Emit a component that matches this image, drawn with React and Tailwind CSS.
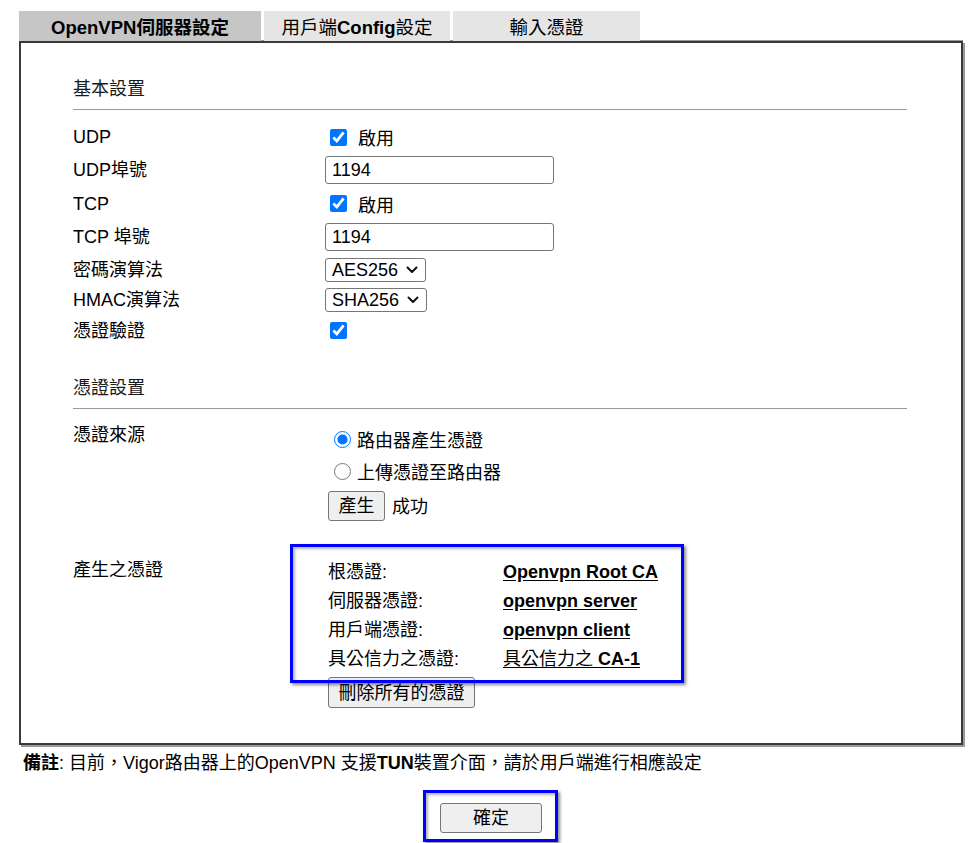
import React from "react";

function Chevron() {
  return (
    <svg width="12" height="8" viewBox="0 0 12 8" className="ml-auto mr-[7px]">
      <path d="M1.5 1.5 L6 6 L10.5 1.5" fill="none" stroke="#111" strokeWidth="2" strokeLinecap="round" strokeLinejoin="round" />
    </svg>
  );
}

function FakeSelect({ value, w }) {
  return (
    <div className={`flex items-center h-[24px] border border-[#767676] rounded-[3px] bg-white pl-[6px] ${w}`}>
      <span className="leading-none">{value}</span>
      <Chevron />
    </div>
  );
}

function TextBox({ value }) {
  return (
    <div className="flex items-center w-[229px] h-[28px] border border-[#767676] rounded-[3px] bg-white pl-[6px]">
      <span className="leading-none">{value}</span>
    </div>
  );
}

function Check({ label }) {
  return (
    <div className="flex items-center pl-[5px]">
      <input type="checkbox" defaultChecked className="w-[17px] h-[17px] accent-[#0075ff]" />
      {label && <span className="ml-[11px] mt-[4px] leading-none">{label}</span>}
    </div>
  );
}

function Btn({ children, w, h = "h-[31px]" }) {
  return (
    <div className={`flex items-center justify-center ${w} ${h} border border-[#767676] rounded-[3px] bg-[#efefef]`}>
      <span className="leading-none">{children}</span>
    </div>
  );
}

function Row({ label, h, children }) {
  return (
    <div className={`flex items-center ${h}`}>
      <div className="w-[252px] leading-[24px]">{label}</div>
      <div className="flex items-center">{children}</div>
    </div>
  );
}

export default function App() {
  return (
    <div className="relative w-[974px] h-[843px] bg-white text-black text-[18px] font-['Liberation_Sans','Noto_Sans_CJK_TC',sans-serif] overflow-hidden">
      {/* Tabs */}
      <div className="flex gap-[3px] pt-[11px] pl-[19px] text-[18.5px]">
        <div className="w-[242px] h-[30px] pt-[3px] bg-[#c6c6c6] flex items-center justify-center font-bold">OpenVPN伺服器設定</div>
        <div className="w-[186px] h-[30px] pt-[3px] bg-[#e5e5e5] flex items-center justify-center">
          用戶端<span className="font-bold">Config</span>設定
        </div>
        <div className="w-[187px] h-[30px] pt-[3px] bg-[#e5e5e5] flex items-center justify-center">輸入憑證</div>
      </div>

      {/* Panel */}
      <div className="ml-[19px] w-[944px] h-[704px] border-2 border-[#3a3a3a] shadow-[0_-1px_0_#9a9a9a,2px_2px_0_#9a9a9a] pl-[52px] pr-[54px] pt-[34px]">
        <div className="leading-[24px] text-[#1a1a1a]">基本設置</div>
        <div className="mt-[8px] h-px bg-[#9a9a9a]" />

        <div className="mt-[11px]">
          <Row label="UDP" h="h-[32px]"><Check label="啟用" /></Row>
          <Row label="UDP埠號" h="h-[34px]"><TextBox value="1194" /></Row>
          <Row label="TCP" h="h-[33px]"><Check label="啟用" /></Row>
          <Row label="TCP 埠號" h="h-[34px]"><TextBox value="1194" /></Row>
          <Row label="密碼演算法" h="h-[31px]"><FakeSelect value="AES256" w="w-[101px]" /></Row>
          <Row label="HMAC演算法" h="h-[30px]"><FakeSelect value="SHA256" w="w-[102px]" /></Row>
          <Row label="憑證驗證" h="h-[31px]"><Check /></Row>
        </div>

        <div className="mt-[30px] leading-[24px] text-[#1a1a1a]">憑證設置</div>
        <div className="mt-[8px] h-px bg-[#9a9a9a]" />

        <div className="mt-[14px] flex">
          <div className="w-[252px] leading-[24px]">憑證來源</div>
          <div className="flex flex-col">
            <div className="flex items-center h-[32px] pl-[9px]">
              <input type="radio" name="src" defaultChecked className="w-[17px] h-[17px] accent-[#0075ff]" />
              <span className="ml-[6px] mt-[3px] leading-none">路由器產生憑證</span>
            </div>
            <div className="flex items-center h-[32px] pl-[9px]">
              <input type="radio" name="src" className="w-[17px] h-[17px] accent-[#0075ff]" />
              <span className="ml-[6px] mt-[3px] leading-none">上傳憑證至路由器</span>
            </div>
            <div className="mt-[4px] flex items-center pl-[3px]">
              <Btn w="w-[57px]" h="h-[30px]">產生</Btn>
              <span className="ml-[7px] mt-[2px] leading-none">成功</span>
            </div>
          </div>
        </div>

        <div className="mt-[36px] flex">
          <div className="w-[252px] leading-[24px] pt-[1px]">產生之憑證</div>
          <div className="flex flex-col pl-[3px]">
            {[
              ["根憑證:", <span className="font-bold">Openvpn Root CA</span>],
              ["伺服器憑證:", <span className="font-bold">openvpn server</span>],
              ["用戶端憑證:", <span className="font-bold">openvpn client</span>],
              ["具公信力之憑證:", <span>具公信力之 <span className="font-bold">CA-1</span></span>],
            ].map(([l, v], i) => (
              <div key={i} className="flex items-center h-[29px]">
                <div className="w-[175px] leading-none">{l}</div>
                <div className="leading-none underline underline-offset-2">{v}</div>
              </div>
            ))}
            <div className="mt-[4px]">
              <Btn w="w-[147px]">刪除所有的憑證</Btn>
            </div>
          </div>
        </div>
      </div>

      {/* Note */}
      <div className="mt-[6px] pl-[23px] leading-[24px]">
        <span className="font-bold">備註</span>: 目前，Vigor路由器上的OpenVPN 支援<span className="font-bold">TUN</span>裝置介面，請於用戶端進行相應設定
      </div>

      <div className="mt-[28px] ml-[19px] w-[944px] flex justify-center">
        <Btn w="w-[102px]" h="h-[30px]">確定</Btn>
      </div>

      {/* Annotation boxes */}
      <div className="absolute left-[290px] top-[544px] w-[394px] h-[139px] border-[3px] border-[#0000ff] shadow-[2px_2px_3px_rgba(0,0,0,0.45),inset_2px_2px_3px_rgba(0,0,0,0.3)] pointer-events-none" />
      <div className="absolute left-[423px] top-[790px] w-[135px] h-[52px] border-[3px] border-[#0000ff] shadow-[2px_2px_3px_rgba(0,0,0,0.45),inset_2px_2px_3px_rgba(0,0,0,0.3)] pointer-events-none" />
    </div>
  );
}
